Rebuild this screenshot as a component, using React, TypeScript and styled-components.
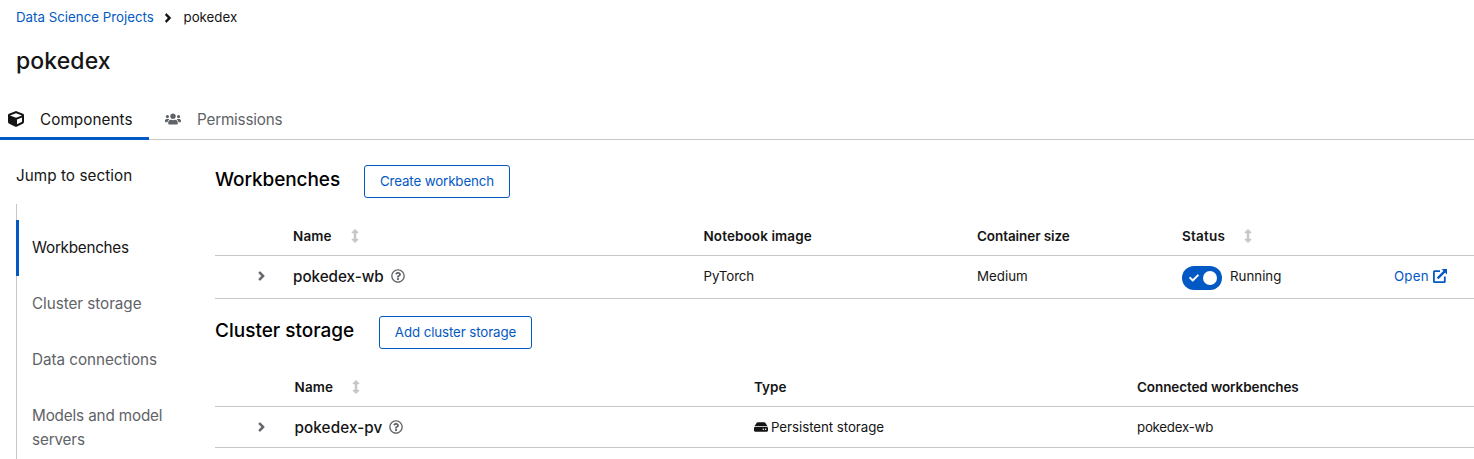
import React from "react";
import styled, { createGlobalStyle } from "styled-components";
import {
  FaAngleRight,
  FaCheck,
  FaCube,
  FaHdd,
  FaRegQuestionCircle,
  FaUsers,
} from "react-icons/fa";

const color = {
  text: "#151515",
  muted: "#5f6368",
  accent: "#0259c4",
  line: "#c7c7c7",
};

const GlobalStyle = createGlobalStyle`
  * { box-sizing: border-box; }
  body {
    margin: 0;
    background: #fff;
    color: ${color.text};
    font-family: Inter, "Liberation Sans", sans-serif;
    font-size: 13.3px;
    overflow: hidden;
  }
  ul { list-style: none; margin: 0; padding: 0; }
`;

const Page = styled.div`
  display: flex;
  flex-direction: column;
  height: 459px;
  overflow: hidden;
`;

/* Inline text run with adjustable letter spacing */
const Run = styled.span<{ $track?: number }>`
  letter-spacing: ${(p) => p.$track ?? 0}px;
  white-space: nowrap;
`;

const Breadcrumb = styled.nav`
  display: flex;
  align-items: center;
  height: 21px;
  margin: 7px 0 0 16px;
  line-height: 21px;
`;

const Crumb = styled.a`
  color: ${color.accent};
  text-decoration: none;
  width: 146px;
`;

const CrumbDivider = styled.span`
  display: flex;
  width: 21.5px;
  svg { width: 12px; height: 14px; stroke: currentColor; stroke-width: 14px; }
`;

const Title = styled.h1`
  margin: 18px 0 0 16px;
  font-size: 23px;
  font-weight: 500;
  line-height: 31px;
`;

const Tabs = styled.div`
  display: flex;
  gap: 8px;
  height: 41px;
  margin-top: 22px;
  border-bottom: 1px solid ${color.line};
`;

const Tab = styled.button<{ $active?: boolean }>`
  display: flex;
  align-items: center;
  gap: 16px;
  height: 41px;
  padding: 3px 16px 0 8px;
  border: 0;
  border-bottom: 3px solid ${(p) => (p.$active ? color.accent : "transparent")};
  background: none;
  color: ${(p) => (p.$active ? color.text : color.muted)};
  font-family: inherit;
  font-size: 15.25px;
  line-height: 24px;
  & > svg { width: 16px; height: 16px; margin-bottom: 2px; }
  & > span { width: ${(p) => (p.$active ? "93px" : "86px")}; text-align: left; }
`;

const Body = styled.div`
  display: flex;
  flex: 1;
  min-height: 0;
`;

const JumpLinks = styled.aside`
  width: 199px;
  flex: none;
  margin-left: 16px;
  padding-top: 24px;
  font-size: 15.25px;
  line-height: 24px;
`;

const JumpList = styled.ul`
  && {
    margin-top: 16px;
    padding: 16px 0;
    border-left: 1px solid ${color.line};
  }
`;

const JumpItem = styled.li<{ $active?: boolean }>`
  margin-left: -1px;
  padding: 16px 40px 16px 13px;
  border-left: 3px solid ${(p) => (p.$active ? color.accent : "transparent")};
  color: ${(p) => (p.$active ? color.text : color.muted)};
`;

const Main = styled.main`
  flex: 1;
  min-width: 0;
`;

const SectionHeader = styled.div<{ $top: number }>`
  display: flex;
  gap: 24px;
  padding-top: ${(p) => p.$top}px;
`;

const SectionTitle = styled.h2<{ $width: number }>`
  margin: 0;
  width: ${(p) => p.$width}px;
  font-size: 19px;
  font-weight: 500;
  line-height: 29px;
  color: #000;
`;

const OutlineButton = styled.button<{ $width: number }>`
  width: ${(p) => p.$width}px;
  height: 33px;
  padding: 0;
  border: 1px solid ${color.accent};
  border-radius: 3px;
  background: #fff;
  color: ${color.accent};
  font: inherit;
  line-height: 21px;
`;

const TableRow = styled.div<{ $cols: string; $height: number; $lift?: number }>`
  display: grid;
  grid-template-columns: ${(p) => p.$cols};
  align-items: center;
  height: ${(p) => p.$height}px;
  padding-bottom: ${(p) => p.$lift ?? 0}px;
  border-bottom: 1px solid ${color.line};
`;

const HeadRow = styled(TableRow)`
  padding-top: 19px;
  font-size: 13.5px;
  font-weight: 600;
`;

const Cell = styled.div`
  display: flex;
  align-items: center;
`;

const SortGlyph = styled.svg`
  width: 6px;
  height: 14px;
  margin-left: 20px;
  fill: ${color.line};
  stroke: ${color.line};
  stroke-width: 0.5px;
  overflow: visible;
`;

const Toggle = styled(Cell)`
  padding-left: 42px;
  color: ${color.muted};
  svg { width: 9px; height: 14px; stroke: currentColor; stroke-width: 14px; }
`;

const ItemName = styled(Cell)`
  gap: 7px;
  font-size: 15.25px;
  font-weight: 500;
  svg { width: 14px; height: 14px; color: ${color.muted}; }
`;

const Switch = styled.span`
  display: flex;
  align-items: center;
  justify-content: space-between;
  width: 40px;
  height: 24px;
  margin: 4px 8px 0 0;
  padding: 0 5px 0 7px;
  border-radius: 12px;
  background: ${color.accent};
  color: #fff;
  svg { width: 10px; height: 10px; }
  &::after {
    content: "";
    width: 14px;
    height: 14px;
    border-radius: 50%;
    background: #fff;
  }
`;

const OpenLink = styled.a`
  display: flex;
  align-items: center;
  gap: 4px;
  color: ${color.accent};
  svg { width: 14px; height: 14px; }
`;

const StorageType = styled(Cell)`
  gap: 3px;
  svg { width: 14px; height: 14px; }
`;

const SortIcon = () => (
  <SortGlyph viewBox="0 0 6 14">
    <path d="M3 .2 6 3.2V4H4v6h2v.8L3 13.8 0 10.8V10h2V4H0v-.8Z" />
  </SortGlyph>
);

const ExternalLinkIcon = () => (
  <svg viewBox="0 0 14 14" fill="none" stroke="currentColor">
    <path d="M7 2.2H1.5a.6.6 0 0 0-.6.6v9.7c0 .3.3.6.6.6h9.7c.3 0 .6-.3.6-.6V7.4" strokeWidth="1.8" />
    <path d="M4.6 9.4 11.6 2.4" strokeWidth="2.3" />
    <path d="M8.6 0H14v5.4Z" fill="currentColor" stroke="none" />
  </svg>
);

const workbenchCols = "78px 410.5px 273.5px 205px 212px 1fr";
const storageCols = "79.5px 459.5px 383px 1fr";

const jumpTargets: { label: string[]; track: number; active?: boolean }[] = [
  { label: ["Workbenches"], track: -0.26, active: true },
  { label: ["Cluster storage"], track: -0.05 },
  { label: ["Data connections"], track: -0.05 },
  { label: ["Models and model", "servers"], track: -0.15 },
];

export default function App() {
  return (
    <Page>
      <GlobalStyle />
      <Breadcrumb>
        <Crumb><Run>Data Science Projects</Run></Crumb>
        <CrumbDivider><FaAngleRight /></CrumbDivider>
        <Run>pokedex</Run>
      </Breadcrumb>
      <Title><Run $track={0.1}>pokedex</Run></Title>
      <Tabs>
        <Tab $active><FaCube /><Run $track={0.06}>Components</Run></Tab>
        <Tab><FaUsers /><Run $track={-0.2}>Permissions</Run></Tab>
      </Tabs>
      <Body>
        <JumpLinks>
          <Run $track={0.05}>Jump to section</Run>
          <JumpList>
            {jumpTargets.map((t) => (
              <JumpItem key={t.label[0]} $active={t.active}>
                {t.label.map((word) => (
                  <React.Fragment key={word}><Run $track={t.track}>{word}</Run> </React.Fragment>
                ))}
              </JumpItem>
            ))}
          </JumpList>
        </JumpLinks>
        <Main>
          <SectionHeader $top={25}>
            <SectionTitle $width={125}><Run $track={-0.08}>Workbenches</Run></SectionTitle>
            <OutlineButton $width={146}><Run $track={-0.12}>Create workbench</Run></OutlineButton>
          </SectionHeader>
          <HeadRow $cols={workbenchCols} $height={58}>
            <Cell />
            <Cell><Run $track={0.15}>Name</Run><SortIcon /></Cell>
            <Cell><Run $track={0.1}>Notebook image</Run></Cell>
            <Cell><Run $track={-0.08}>Container size</Run></Cell>
            <Cell><Run $track={0.2}>Status</Run><SortIcon /></Cell>
          </HeadRow>
          <TableRow $cols={workbenchCols} $height={43} $lift={2}>
            <Toggle><FaAngleRight /></Toggle>
            <ItemName><Run $track={-0.04}>pokedex-wb</Run><FaRegQuestionCircle /></ItemName>
            <Cell><Run $track={-0.1}>PyTorch</Run></Cell>
            <Cell><Run>Medium</Run></Cell>
            <Cell><Switch><FaCheck /></Switch><Run>Running</Run></Cell>
            <OpenLink><Run $track={0.2}>Open</Run><ExternalLinkIcon /></OpenLink>
          </TableRow>
          <SectionHeader $top={17}>
            <SectionTitle $width={140}><Run>Cluster storage</Run></SectionTitle>
            <OutlineButton $width={153}><Run $track={-0.1}>Add cluster storage</Run></OutlineButton>
          </SectionHeader>
          <HeadRow $cols={storageCols} $height={58}>
            <Cell />
            <Cell><Run $track={0.15}>Name</Run><SortIcon /></Cell>
            <Cell><Run>Type</Run></Cell>
            <Cell><Run $track={-0.1}>Connected workbenches</Run></Cell>
          </HeadRow>
          <TableRow $cols={storageCols} $height={41}>
            <Toggle><FaAngleRight /></Toggle>
            <ItemName><Run $track={0.1}>pokedex-pv</Run><FaRegQuestionCircle /></ItemName>
            <StorageType><FaHdd /><Run $track={-0.05}>Persistent storage</Run></StorageType>
            <Cell><Run $track={-0.25}>pokedex-wb</Run></Cell>
          </TableRow>
        </Main>
      </Body>
    </Page>
  );
}
